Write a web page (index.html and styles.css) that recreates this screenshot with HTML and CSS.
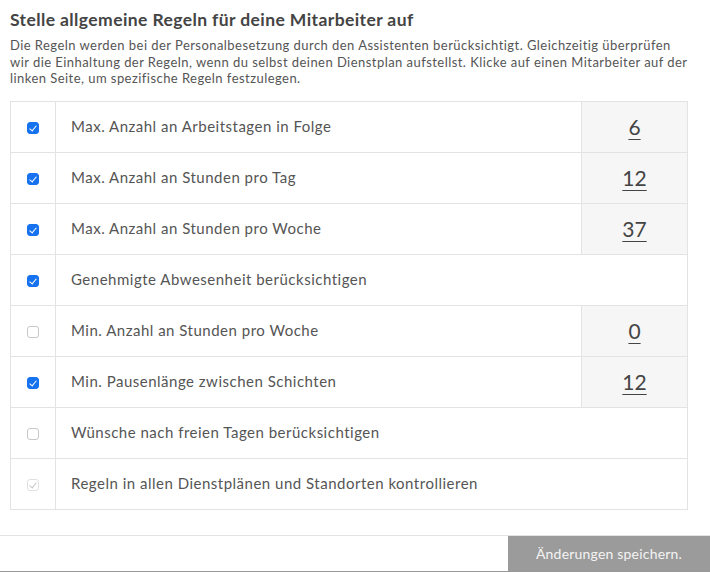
FILE: index.html
```html
<!DOCTYPE html>
<html lang="de">
<head>
    <meta charset="UTF-8">
    <title>Regeln</title>
    <link rel="stylesheet" href="styles.css">
</head>
<body>
    <div class="rules">
        <h2>Stelle allgemeine Regeln für deine Mitarbeiter auf</h2>
        <p class="intro">Die Regeln werden bei der Personalbesetzung durch den Assistenten berücksichtigt. Gleichzeitig überprüfen wir die Einhaltung der Regeln, wenn du selbst deinen Dienstplan aufstellst. Klicke auf einen Mitarbeiter auf der linken Seite, um spezifische Regeln festzulegen.</p>

        <table class="rule-table">
            <tr>
                <td class="check"><span class="box on"></span></td>
                <td class="label">Max. Anzahl an Arbeitstagen in Folge</td>
                <td class="value"><a href="#">6</a></td>
            </tr>
            <tr>
                <td class="check"><span class="box on"></span></td>
                <td class="label">Max. Anzahl an Stunden pro Tag</td>
                <td class="value"><a href="#">12</a></td>
            </tr>
            <tr>
                <td class="check"><span class="box on"></span></td>
                <td class="label">Max. Anzahl an Stunden pro Woche</td>
                <td class="value"><a href="#">37</a></td>
            </tr>
            <tr>
                <td class="check"><span class="box on"></span></td>
                <td class="label" colspan="2">Genehmigte Abwesenheit berücksichtigen</td>
            </tr>
            <tr>
                <td class="check"><span class="box"></span></td>
                <td class="label">Min. Anzahl an Stunden pro Woche</td>
                <td class="value"><a href="#">0</a></td>
            </tr>
            <tr>
                <td class="check"><span class="box on"></span></td>
                <td class="label">Min. Pausenlänge zwischen Schichten</td>
                <td class="value"><a href="#">12</a></td>
            </tr>
            <tr>
                <td class="check"><span class="box"></span></td>
                <td class="label" colspan="2">Wünsche nach freien Tagen berücksichtigen</td>
            </tr>
            <tr>
                <td class="check"><span class="box disabled"></span></td>
                <td class="label" colspan="2">Regeln in allen Dienstplänen und Standorten kontrollieren</td>
            </tr>
        </table>
    </div>

    <div class="footer">
        <button class="save">Änderungen speichern.</button>
    </div>
</body>
</html>
```

FILE: styles.css
```css
* {
    margin: 0;
    padding: 0;
    box-sizing: border-box;
}

body {
    font-family: Lato, "Open Sans", sans-serif;
    color: #4a4a4a;
    background-color: #fff;
}

.rules {
    padding: 10px 22px 0 10px;
}

.rules h2 {
    font-size: 17.5px;
    font-weight: bold;
    letter-spacing: 0.4px;
    color: #444;
    line-height: 20px;
}

.intro {
    font-size: 13px;
    letter-spacing: 0.45px;
    line-height: 16.5px;
    margin-top: 7px;
    color: #555;
}

/* Rules table */
.rule-table {
    width: 678px;
    margin-top: 14px;
    border-collapse: collapse;
}

.rule-table td {
    border: 1px solid #e3e3e3;
    height: 51px;
    font-size: 15px;
    padding-bottom: 1px;
}

.check {
    width: 45px;
    text-align: center;
}

.label {
    padding-left: 15px;
    color: #555;
    letter-spacing: 0.5px;
}

.value {
    width: 106px;
    background-color: #f6f6f6;
    text-align: center;
}

.value a {
    color: #444;
    font-size: 21px;
    text-decoration: underline;
    text-underline-offset: 4px;
    text-decoration-thickness: 1px;
}

/* Checkbox look */
.box {
    display: inline-block;
    width: 12px;
    height: 12px;
    border: 1px solid #c8c8c8;
    border-radius: 3px;
    background-color: #fff;
    vertical-align: middle;
    position: relative;
}

.box.on {
    background-color: #1672ef;
    border-color: #1672ef;
}

.box.on::after,
.box.disabled::after {
    content: "";
    position: absolute;
    left: 3px;
    top: 1px;
    width: 3px;
    height: 6px;
    border: solid #fff;
    border-width: 0 1.6px 1.6px 0;
    transform: rotate(40deg);
}

.box.disabled {
    border-color: #e0e0e0;
}

.box.disabled::after {
    border-color: #c4c4c4;
    border-width: 0 1px 1px 0;
}

/* Footer */
.footer {
    margin-top: 25px;
    border-top: 1px solid #e3e3e3;
    border-bottom: 1px solid #999;
    display: flex;
    justify-content: flex-end;
}

.save {
    width: 202px;
    height: 35px;
    background-color: #9b9b9b;
    color: #f4f4f4;
    border: none;
    font-family: Lato, "Open Sans", sans-serif;
    font-size: 14px;
    letter-spacing: 0.2px;
}
```
